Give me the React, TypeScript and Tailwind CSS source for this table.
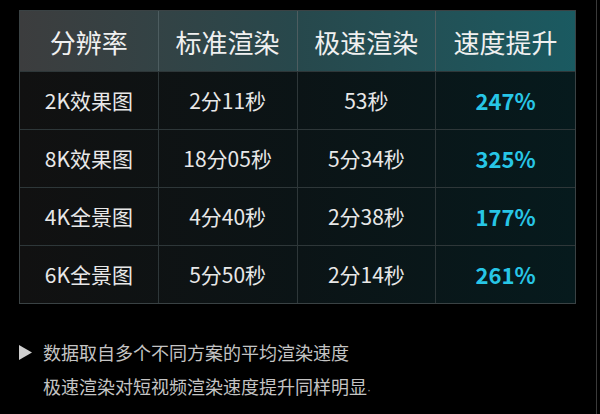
import React from "react";

const rows = [
  { name: "2K效果图", std: "2分11秒", fast: "53秒", up: "247%" },
  { name: "8K效果图", std: "18分05秒", fast: "5分34秒", up: "325%" },
  { name: "4K全景图", std: "4分40秒", fast: "2分38秒", up: "177%" },
  { name: "6K全景图", std: "5分50秒", fast: "2分14秒", up: "261%" },
];

const headers = ["分辨率", "标准渲染", "极速渲染", "速度提升"];

export default function App() {
  return (
    <div
      className="w-[600px] h-[414px] bg-black overflow-hidden flex"
      style={{ fontFamily: '"Noto Sans CJK SC", "Noto Sans", sans-serif' }}
    >
      <div className="flex-1 flex flex-col pl-[19px] pt-[10px]">
        <div className="w-[557px] border border-[#3a4244]">
          <div className="grid grid-cols-4 h-[60px] bg-gradient-to-r from-[#3c3d3e] via-[#27484c] to-[#1a5a61]">
            {headers.map((h, i) => (
              <div
                key={h}
                className={`flex items-center justify-center text-[26px] text-[#f0f0f0] ${
                  i < 3 ? "border-r border-[#4d5d60]" : ""
                }`}
              >
                {h}
              </div>
            ))}
          </div>
          <div className="bg-gradient-to-r from-[#111111] via-[#0b1416] to-[#061a1d]">
            {rows.map((r) => (
              <div
                key={r.name}
                className="grid grid-cols-4 h-[58px] border-t border-[#2e3739]"
              >
                {[r.name, r.std, r.fast].map((c, i) => (
                  <div
                    key={i}
                    className="flex items-center justify-center text-[21px] text-[#e8e8e8] border-r border-[#2e3739]"
                  >
                    {c}
                  </div>
                ))}
                <div className="flex items-center justify-center text-[22px] font-bold text-[#27c6e6]">
                  {r.up}
                </div>
              </div>
            ))}
          </div>
        </div>
        <div className="mt-[36px] flex flex-col gap-[9px] text-[18px] text-[#c4c4c4] leading-[25px]">
          <div className="flex items-center">
            <svg width="13" height="15" viewBox="0 0 13 15" className="mr-[11px]">
              <polygon points="0,0 13,7.5 0,15" fill="#cfcfcf" />
            </svg>
            <span>数据取自多个不同方案的平均渲染速度</span>
          </div>
          <div className="pl-[24px]">
            极速渲染对短视频渲染速度提升同样明显
            <span className="font-['Liberation_Sans'] text-[12px] text-[#9a9a9a]">·</span>
          </div>
        </div>
      </div>
      <div className="w-[1px] bg-[#3a3a3a] mr-[3px]" />
    </div>
  );
}
